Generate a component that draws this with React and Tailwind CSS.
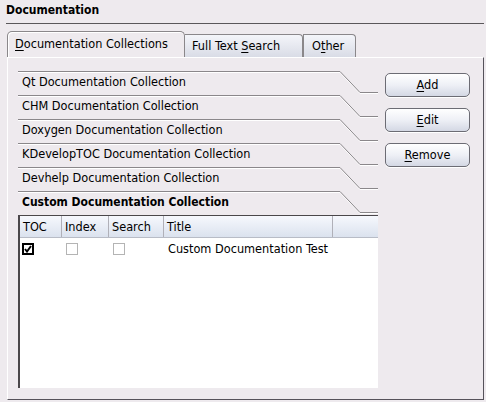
import React from 'react';

const font = "font-['DejaVu_Sans_Condensed','DejaVu_Sans',sans-serif]";

const collections = [
  'Qt Documentation Collection',
  'CHM Documentation Collection',
  'Doxygen Documentation Collection',
  'KDevelopTOC Documentation Collection',
  'Devhelp Documentation Collection',
  'Custom Documentation Collection',
];

function Mnemonic({ text, at = 0 }) {
  return (
    <>
      {text.slice(0, at)}
      <span className="underline underline-offset-2">{text[at]}</span>
      {text.slice(at + 1)}
    </>
  );
}

function ToolboxRow({ label, active }) {
  return (
    <div className="relative h-[24px] pl-[4px] pt-[3px]">
      {/* tab outline drawing */}
      <svg className="absolute left-0 top-0" width="360" height="24">
        <path d="M0 1.5 H322 L342 22.5 H360" fill="none" stroke="#ffffff" strokeWidth="1" />
        <path d="M0 0.5 H322 L342 21.5 H360" fill="none" stroke="#8a878a" strokeWidth="1" />
      </svg>
      <span className={`relative ${active ? 'font-bold text-[12px]' : ''}`}>{label}</span>
    </div>
  );
}

function Checkbox({ checked }) {
  if (checked) {
    return (
      <div className="w-[12px] h-[12px] border-2 border-black bg-white flex items-center justify-center">
        <svg width="8" height="8" viewBox="0 0 8 8">
          <path d="M1 4 L3 6.5 L7 1" fill="none" stroke="#000" strokeWidth="2" />
        </svg>
      </div>
    );
  }
  return <div className="w-[12px] h-[12px] border border-[#b4b4b4] bg-white" />;
}

function ActionButton({ label }) {
  return (
    <button className="w-[85px] h-[24px] rounded-[5px] border border-[#6c6c74] bg-gradient-to-b from-[#ffffff] via-[#eef0f6] to-[#d4d8e4] shadow-[0_1px_0_#ffffff] text-[12.6px] text-black">
      <Mnemonic text={label} />
    </button>
  );
}

export default function App() {
  const cols = [
    { label: 'TOC', w: 'w-[42px]' },
    { label: 'Index', w: 'w-[47px]' },
    { label: 'Search', w: 'w-[55px]' },
    { label: 'Title', w: 'w-[169px]' },
  ];

  return (
    <div className={`w-[486px] h-[402px] bg-[#eeeaee] text-black text-[12.6px] leading-[16px] overflow-hidden ${font}`}>
      {/* Group title */}
      <div className="h-[23px] pl-[6px] pt-[2px] font-bold text-[12px]">Documentation</div>
      <div className="ml-[6px] w-[478px] border-t border-[#5a575a]" />

      {/* Tabs */}
      <div className="mt-[7px] pl-[7px] h-[26px] flex items-end">
        <div className="w-[178px] h-[26px] rounded-t-[5px] border border-b-0 border-[#8a878a] bg-[#eeeaee] pl-[7px] pt-[4px] relative z-10 shadow-[inset_1px_1px_0_#ffffff]">
          <Mnemonic text="Documentation Collections" />
        </div>
        <div className="w-[118px] h-[23px] rounded-tr-[4px] border border-l-0 border-b-0 border-[#8a878a] bg-gradient-to-b from-[#f4f5fa] to-[#d9dce6] pl-[7px] pt-[3px]">
          Full Text <Mnemonic text="Search" />
        </div>
        <div className="w-[53px] h-[23px] rounded-tr-[4px] border border-b-0 border-[#8a878a] bg-gradient-to-b from-[#f4f5fa] to-[#d9dce6] pl-[8px] pt-[3px]">
          <Mnemonic text="Other" at={1} />
        </div>
      </div>

      {/* Panel */}
      <div className="ml-[7px] w-[477px] h-[343px] border-t border-l border-t-[#ffffff] border-l-[#ffffff] border-r border-b border-r-[#55525a] border-b-[#55525a] flex pl-[10px] pt-[13px]">
        <div className="w-[360px] flex flex-col">
          {collections.map((c, i) => (
            <ToolboxRow key={c} label={c} active={i === collections.length - 1} />
          ))}
          {/* Table */}
          <div className="h-[173px] bg-white border-t border-l-2 border-[#4a474a] flex flex-col">
            <div className="h-[22px] flex bg-gradient-to-b from-[#f6f8fd] to-[#dbe2ee] border-b border-[#b8bcc6]">
              {cols.map((c) => (
                <div key={c.label} className={`${c.w} border-r border-[#b0b0b8] pl-[3px] pt-[3px]`}>
                  {c.label}
                </div>
              ))}
              <div className="flex-1" />
            </div>
            <div className="h-[21px] flex items-center">
              <div className="w-[42px] pl-[2px]"><Checkbox checked /></div>
              <div className="w-[47px] pl-[4px]"><Checkbox /></div>
              <div className="w-[55px] pl-[4px]"><Checkbox /></div>
              <div className="pl-[4px]">Custom Documentation Test</div>
            </div>
          </div>
        </div>

        {/* Buttons */}
        <div className="ml-[7px] pt-[2px] flex flex-col gap-[11px]">
          <ActionButton label="Add" />
          <ActionButton label="Edit" />
          <ActionButton label="Remove" />
        </div>
      </div>
    </div>
  );
}
